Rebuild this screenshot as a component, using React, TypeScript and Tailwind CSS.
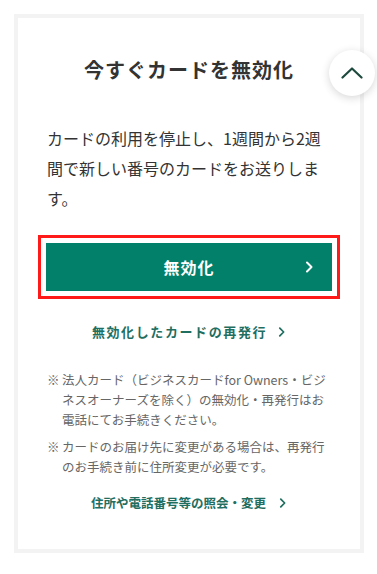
import React from "react";

const Chevron = ({ className = "" }: { className?: string }) => (
  <svg viewBox="0 0 10 14" className={className} fill="none" stroke="currentColor" strokeWidth="2" strokeLinecap="round" strokeLinejoin="round">
    <path d="M3 2.5 L7.5 7 L3 11.5" />
  </svg>
);

export default function App() {
  return (
    <div className="w-[377px] h-[574px] bg-white pt-[14px] pl-[14px]" style={{ fontFamily: '"Noto Sans CJK JP", "Noto Sans", sans-serif' }}>
      <div className="relative w-[350px] h-[539px] border-4 border-[#f3f3f3] bg-white px-[29px] pt-[37px]">
        <div className="absolute left-[311px] top-[32px] w-[46px] h-[46px] rounded-full bg-white shadow-[0_2px_8px_rgba(0,0,0,0.16)] flex items-center justify-center">
          <svg viewBox="0 0 22 12" className="w-[22px] h-[12px]" fill="none" stroke="#1d4a3c" strokeWidth="2.2" strokeLinecap="round" strokeLinejoin="round">
            <path d="M1.5 10.5 L11 1.5 L20.5 10.5" />
          </svg>
        </div>
        <h1 className="text-center text-[20px] leading-[30px] font-bold text-[#333] tracking-[1px]">今すぐカードを無効化</h1>
        <p className="mt-[38px] text-[16px] leading-[30px] text-[#333]">
          カードの利用を停止し、1週間から2週間で新しい番号のカードをお送りします。
        </p>
        <div className="mt-[22px] -mx-[9px] border-[3px] border-[#ff1a1a] p-[5px]">
          <button className="relative w-full h-[48px] bg-[#03806a] text-white font-bold text-[16px] tracking-[1px] flex items-center justify-center">
            無効化
            <Chevron className="absolute right-[18px] top-[17px] w-[10px] h-[14px]" />
          </button>
        </div>
        <div className="mt-[23px] flex items-center justify-center text-[#1f6e5f] font-bold text-[13px] leading-[20px] tracking-[1.6px]">
          <span>無効化したカードの再発行</span>
          <Chevron className="ml-[10px] w-[9px] h-[12px]" />
        </div>
        <ul className="mt-[28px] text-[12.5px] leading-[20px] text-[#666]">
          <li className="flex">
            <span className="w-[15px] shrink-0">※</span>
            <span>
              法人カード（ビジネスカードfor Owners・ビジ
              <br />
              ネスオーナーズを除く）の無効化・再発行はお
              <br />
              電話にてお手続きください。
            </span>
          </li>
          <li className="flex mt-[7px]">
            <span className="w-[15px] shrink-0">※</span>
            <span>
              カードのお届け先に変更がある場合は、再発行
              <br />
              のお手続き前に住所変更が必要です。
            </span>
          </li>
        </ul>
        <div className="mt-[16px] flex items-center justify-center text-[#1f6e5f] font-bold text-[12.5px] leading-[20px]">
          <span>住所や電話番号等の照会・変更</span>
          <Chevron className="ml-[12px] w-[9px] h-[12px]" />
        </div>
      </div>
    </div>
  );
}
